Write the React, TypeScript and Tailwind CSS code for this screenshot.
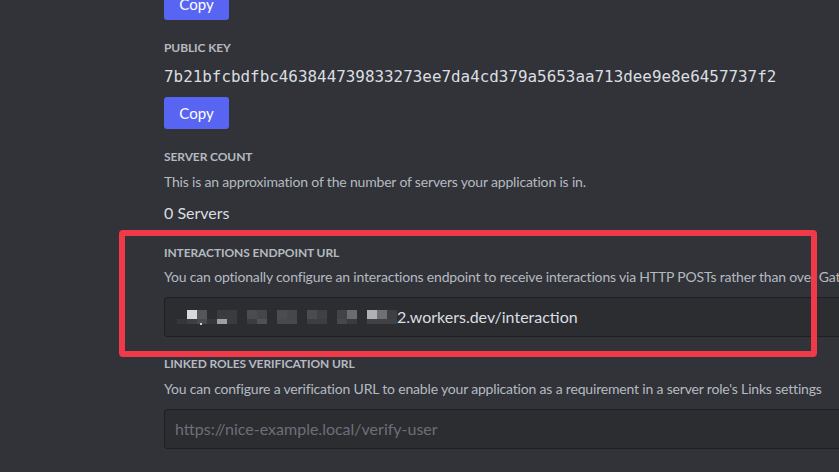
import React from "react"

const font = { fontFamily: 'Lato, "Noto Sans", sans-serif' }

// pixelated blur patch over the secret part of the URL
const blurCells = [
  // row 1
  { x: 0, y: 0, w: 10, h: 9, c: "#d9d9da" },
  { x: 10, y: 0, w: 10, h: 9, c: "#55565a" },
  { x: 30, y: 0, w: 20, h: 9, c: "#3a3b3f" },
  { x: 60, y: 0, w: 10, h: 9, c: "#4b4c51" },
  { x: 70, y: 0, w: 10, h: 9, c: "#45464b" },
  { x: 90, y: 0, w: 10, h: 9, c: "#4b4c51" },
  { x: 100, y: 0, w: 10, h: 9, c: "#46474c" },
  { x: 120, y: 0, w: 10, h: 9, c: "#4b4c51" },
  { x: 130, y: 0, w: 10, h: 9, c: "#404145" },
  { x: 150, y: 0, w: 10, h: 9, c: "#424347" },
  { x: 160, y: 0, w: 10, h: 9, c: "#6b6c70" },
  { x: 180, y: 0, w: 10, h: 9, c: "#b1b1b3" },
  { x: 190, y: 0, w: 10, h: 9, c: "#6f7073" },
  { x: 200, y: 0, w: 10, h: 9, c: "#3e3f43" },
  // row 2
  { x: -10, y: 9, w: 10, h: 5, c: "#35363a" },
  { x: 0, y: 9, w: 10, h: 5, c: "#3d3e42" },
  { x: 10, y: 9, w: 10, h: 5, c: "#4a4b50" },
  { x: 20, y: 9, w: 10, h: 5, c: "#36373b" },
  { x: 30, y: 9, w: 10, h: 5, c: "#9e9fa1" },
  { x: 40, y: 9, w: 10, h: 5, c: "#3a3b3f" },
  { x: 60, y: 9, w: 10, h: 5, c: "#3b3c40" },
  { x: 70, y: 9, w: 10, h: 5, c: "#505156" },
  { x: 90, y: 9, w: 20, h: 5, c: "#48494d" },
  { x: 120, y: 9, w: 20, h: 5, c: "#3d3e42" },
  { x: 150, y: 9, w: 10, h: 5, c: "#47484c" },
  { x: 160, y: 9, w: 10, h: 5, c: "#3a3b3f" },
  { x: 180, y: 9, w: 30, h: 5, c: "#404145" },
]

function BlurPatch() {
  return (
    <svg width="222" height="16" viewBox="-10 0 222 16" className="shrink-0">
      {blurCells.map((b, i) => (
        <rect key={i} x={b.x} y={b.y + 1} width={b.w} height={b.h} fill={b.c} />
      ))}
      <rect x="13" y="14" width="2" height="2" fill="#cfd0d2" />
    </svg>
  )
}

function Label({ children }: { children: React.ReactNode }) {
  return (
    <h3 className="text-[12px] leading-[16px] font-bold uppercase text-[#b5bac1] tracking-[-0.1px]">
      {children}
    </h3>
  )
}

function Desc({ children, className = "" }: { children: React.ReactNode; className?: string }) {
  return (
    <p className={"text-[14px] leading-[20px] text-[#b5bac1] whitespace-nowrap tracking-[-0.18px] " + className}>
      {children}
    </p>
  )
}

function CopyButton({ className = "" }: { className?: string }) {
  return (
    <button
      className={
        "h-[32px] w-[65px] rounded-[3px] bg-[#5865f2] text-white text-[15px] " + className
      }
    >
      Copy
    </button>
  )
}

export default function App() {
  return (
    <div className="relative w-[839px] h-[472px] overflow-hidden bg-[#313338]" style={font}>
      <div className="flex flex-col items-start pl-[164px]">
        <CopyButton className="-mt-[12px]" />

        <div className="mt-[20px]">
          <Label>Public Key</Label>
        </div>
        <div
          className="mt-[9px] text-[15.9px] leading-[24px] text-[#dbdee1]"
          style={{ fontFamily: '"DejaVu Sans Mono", "Liberation Mono", monospace' }}
        >
          7b21bfcbdfbc463844739833273ee7da4cd379a5653aa713dee9e8e6457737f2
        </div>
        <CopyButton className="mt-[8px]" />

        <div className="mt-[20px]">
          <Label>Server Count</Label>
        </div>
        <Desc className="mt-[7px]">
          This is an approximation of the number of servers your application is in.
        </Desc>
        <div className="mt-[9px] text-[16px] leading-[24px] text-[#dbdee1]">0 Servers</div>

        <div className="mt-[20px]">
          <Label>Interactions Endpoint URL</Label>
        </div>
        <Desc className="mt-[6px]">
          You can optionally configure an interactions endpoint to receive interactions via HTTP POSTs rather than over Gateway with a bot user.
        </Desc>
        <div className="mt-[10px] w-[720px] h-[40px] flex items-center rounded-[3px] border border-[#1e1f22] bg-[#2b2d31] pl-[12px] text-[16px] text-[#dbdee1] whitespace-nowrap">
          <BlurPatch />
          <span className="-ml-[2px]">2.workers.dev/interaction</span>
        </div>

        <div className="mt-[19px]">
          <Label>Linked Roles Verification URL</Label>
        </div>
        <Desc className="mt-[7px]">
          You can configure a verification URL to enable your application as a requirement in a server role's Links settings
        </Desc>
        <div className="mt-[10px] w-[720px] h-[40px] flex items-center rounded-[3px] border border-[#1e1f22] bg-[#2b2d31] px-[10px] text-[16px] text-[#6d6f78] whitespace-nowrap">
          https://nice-example.local/verify-user
        </div>
      </div>

      {/* red annotation box */}
      <div className="absolute left-[119px] top-[230px] w-[698px] h-[127px] rounded-[4px] border-[6px] border-[#f03a4a]" />
    </div>
  )
}
